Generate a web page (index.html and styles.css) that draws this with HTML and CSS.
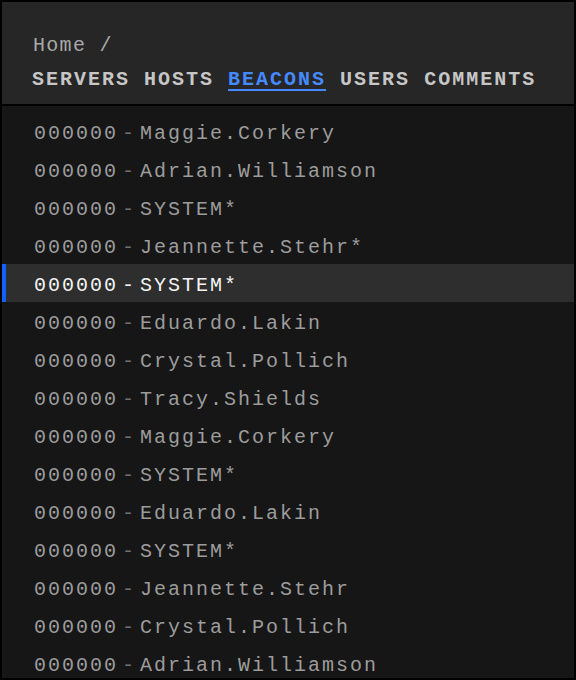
FILE: index.html
```html
<!DOCTYPE html>
<html lang="en">
<head>
<meta charset="utf-8">
<title>Beacons</title>
<link rel="stylesheet" href="styles.css">
</head>
<body>
<div class="frame">
  <header class="header">
    <div class="crumbs">Home /</div>
    <nav class="nav"><a class="nav-link">SERVERS</a> <a class="nav-link">HOSTS</a> <a class="nav-link active">BEACONS</a> <a class="nav-link">USERS</a> <a class="nav-link">COMMENTS</a></nav>
  </header>
  <ul class="list">
    <li class="row"><span class="id">000000</span><span class="sep">-</span><span class="name">Maggie.Corkery</span></li>
    <li class="row"><span class="id">000000</span><span class="sep">-</span><span class="name">Adrian.Williamson</span></li>
    <li class="row"><span class="id">000000</span><span class="sep">-</span><span class="name">SYSTEM*</span></li>
    <li class="row"><span class="id">000000</span><span class="sep">-</span><span class="name">Jeannette.Stehr*</span></li>
    <li class="row selected"><span class="id">000000</span><span class="sep">-</span><span class="name">SYSTEM*</span></li>
    <li class="row"><span class="id">000000</span><span class="sep">-</span><span class="name">Eduardo.Lakin</span></li>
    <li class="row"><span class="id">000000</span><span class="sep">-</span><span class="name">Crystal.Pollich</span></li>
    <li class="row"><span class="id">000000</span><span class="sep">-</span><span class="name">Tracy.Shields</span></li>
    <li class="row"><span class="id">000000</span><span class="sep">-</span><span class="name">Maggie.Corkery</span></li>
    <li class="row"><span class="id">000000</span><span class="sep">-</span><span class="name">SYSTEM*</span></li>
    <li class="row"><span class="id">000000</span><span class="sep">-</span><span class="name">Eduardo.Lakin</span></li>
    <li class="row"><span class="id">000000</span><span class="sep">-</span><span class="name">SYSTEM*</span></li>
    <li class="row"><span class="id">000000</span><span class="sep">-</span><span class="name">Jeannette.Stehr</span></li>
    <li class="row"><span class="id">000000</span><span class="sep">-</span><span class="name">Crystal.Pollich</span></li>
    <li class="row"><span class="id">000000</span><span class="sep">-</span><span class="name">Adrian.Williamson</span></li>
  </ul>
</div>
</body>
</html>
```
FILE: styles.css
```css
* { box-sizing: border-box; }
html, body { margin: 0; padding: 0; background: #000; }
body { font-family: "Liberation Mono", "DejaVu Sans Mono", monospace; }

.frame {
  width: 576px;
  height: 680px;
  border: 2px solid #000;
  background: #161616;
  overflow: hidden;
  display: flex;
  flex-direction: column;
}

.header {
  background: #262626;
  border-bottom: 2px solid #000;
  padding: 32px 30px 12px 30px;
  flex: none;
}

.crumbs {
  font-size: 20px;
  line-height: 24px;
  letter-spacing: 1.3px;
  color: #a8a8a8;
  padding-left: 1px;
}

.nav {
  margin-top: 10px;
  font-size: 20px;
  line-height: 24px;
  font-weight: 700;
  letter-spacing: 2px;
  color: #c6c6c6;
  white-space: nowrap;
}

.nav-link.active {
  color: #4589ff;
  text-decoration: underline;
  text-decoration-thickness: 2px;
  text-underline-offset: 4px;
}

.list {
  list-style: none;
  margin: 0;
  padding: 6px 0 0 0;
}

.row {
  height: 38px;
  display: flex;
  align-items: center;
  padding-left: 32px;
  padding-top: 4px;
  font-size: 20px;
  letter-spacing: 2px;
  color: #9c9c9c;
  white-space: nowrap;
  border-left: 4px solid transparent;
  margin-left: -4px;
}

.row .sep { margin: 0 4px; color: #6f6f6f; }

.row.selected {
  background: #2e2e2e;
  border-left-color: #0f62fe;
  margin-left: 0;
  padding-left: 28px;
  color: #f4f4f4;
}
.row.selected .sep { color: #f4f4f4; }
```
